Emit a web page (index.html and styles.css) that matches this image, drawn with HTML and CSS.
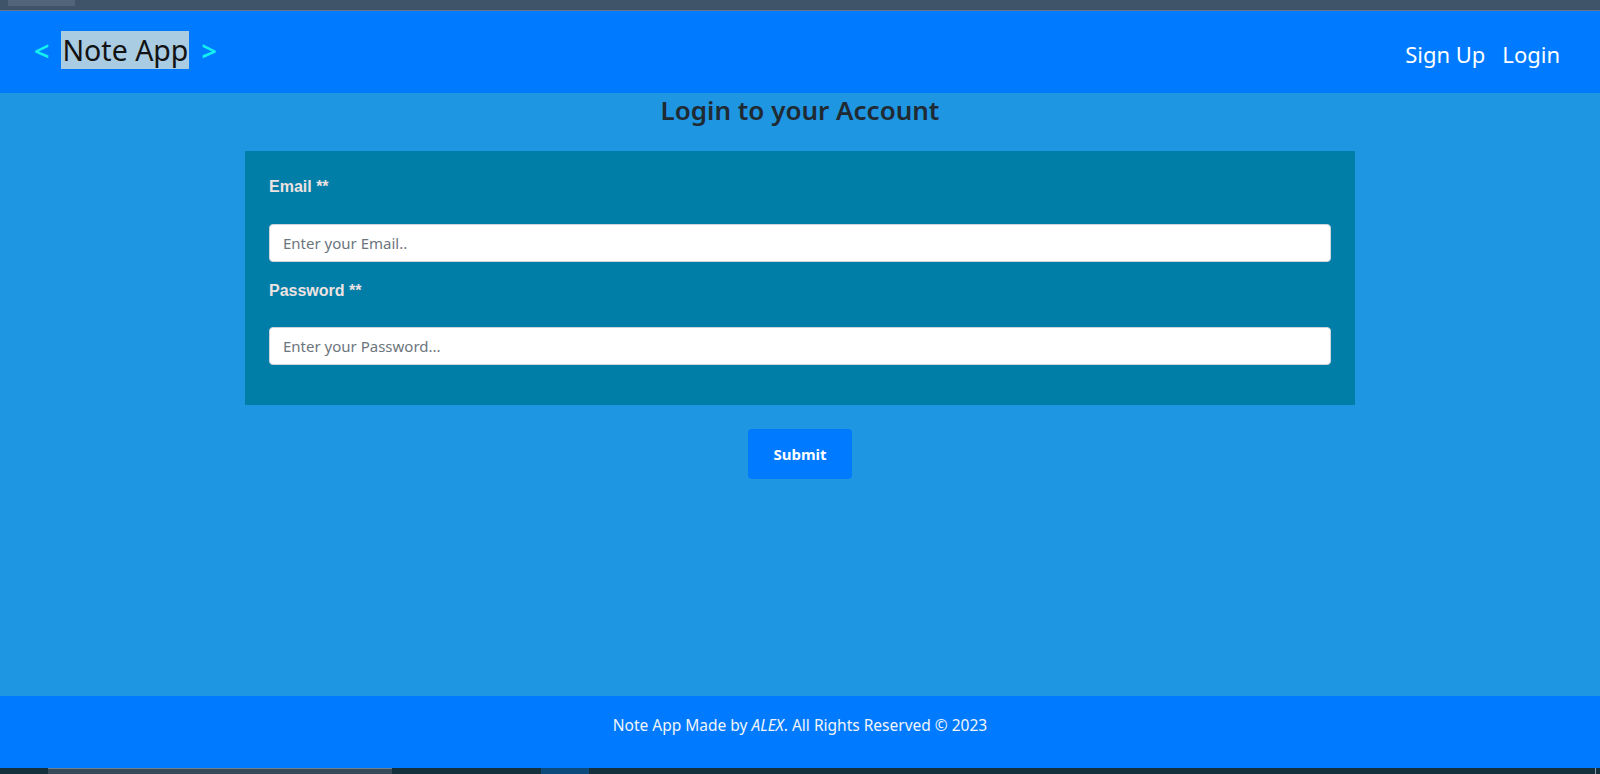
FILE: index.html
```html
<!DOCTYPE html>
<html lang="en">
<head>
<meta charset="utf-8">
<title>Note App</title>
<link rel="stylesheet" href="styles.css">
</head>
<body>
<div class="chrome-top"><div class="chrome-tab"></div></div>
<header class="navbar">
  <div class="brand">
    <span class="brand-arrow">&lt;</span>
    <span class="brand-name">Note App</span>
    <span class="brand-arrow">&gt;</span>
  </div>
  <nav class="nav-links">
    <a class="nav-link" href="#">Sign Up</a>
    <a class="nav-link" href="#">Login</a>
  </nav>
</header>
<main class="main">
  <h2 class="title">Login to your Account</h2>
  <form class="login-form">
    <div class="card">
      <label class="field-label" for="email">Email **</label>
      <input class="field-input" id="email" type="email" placeholder="Enter your Email..">
      <label class="field-label second" for="password">Password **</label>
      <input class="field-input" id="password" type="password" placeholder="Enter your Password...">
    </div>
    <button class="submit-btn" type="button">Submit</button>
  </form>
</main>
<footer class="footer">
  <p class="footer-text">Note App Made by <em>ALEX</em>. All Rights Reserved © 2023</p>
</footer>
<div class="chrome-bottom">
  <div class="task task-a"></div>
  <div class="task task-b"></div>
  <div class="task-end"></div>
</div>
</body>
</html>
```
FILE: styles.css
```css
* { box-sizing: border-box; }
html, body { margin: 0; padding: 0; }
body {
  width: 1600px;
  height: 774px;
  overflow: hidden;
  display: flex;
  flex-direction: column;
  font-family: "Noto Sans", "Open Sans", sans-serif;
  background: #1f96e2;
}
.chrome-top {
  height: 11px;
  background: #3f5469;
  border-bottom: 1px solid #66768a;
  padding-left: 8px;
  flex: none;
}
.chrome-tab {
  width: 67px;
  height: 6px;
  background: #516479;
}
.navbar {
  height: 82px;
  flex: none;
  background: #007bff;
  display: flex;
  align-items: center;
  justify-content: space-between;
  padding: 0 40px 0 34px;
}
.brand {
  display: flex;
  align-items: center;
  font-size: 28.5px;
  margin-top: -4px;
}
.brand-arrow {
  color: #14f0f0;
  font-size: 27px;
  font-weight: 600;
}
.brand-name {
  background: #a9cce2;
  color: #121212;
  margin: 0 12px 0 12px;
  line-height: 38px;
  padding: 0 1px;
}
.nav-links {
  display: flex;
  gap: 17px;
  margin-top: 4px;
}
.nav-link {
  color: #ffffff;
  text-decoration: none;
  font-size: 22px;
}
.main {
  flex: 1;
  display: flex;
  flex-direction: column;
  align-items: center;
}
.title {
  margin: 0;
  padding-top: 0;
  font-size: 26px;
  font-weight: 600;
  color: #1f2a33;
  line-height: 34px;
  height: 58px;
}
.login-form {
  display: flex;
  flex-direction: column;
  align-items: center;
  width: 1110px;
}
.card {
  width: 100%;
  background: #007ea7;
  padding: 24px 24px 40px;
  display: flex;
  flex-direction: column;
}
.field-label {
  font-family: "Liberation Sans", Arial, sans-serif;
  font-weight: bold;
  font-size: 16px;
  line-height: 24px;
  color: #ede2e2;
  margin-bottom: 25px;
}
.field-label.second { margin-top: 17px; margin-bottom: 24px; }
.field-input {
  height: 38px;
  border: 1px solid #ced4da;
  border-radius: 4px;
  padding: 0 13px;
  font-family: "Noto Sans", "Open Sans", sans-serif;
  font-size: 15px;
  background: #fff;
  outline: none;
}
.field-input::placeholder { color: #6c757d; }
.submit-btn {
  margin-top: 24px;
  width: 104px;
  height: 50px;
  border: none;
  border-radius: 4px;
  background: #007bff;
  color: #fff;
  font-family: "Noto Sans", "Open Sans", sans-serif;
  font-weight: bold;
  font-size: 15px;
}
.footer {
  height: 72px;
  flex: none;
  background: #007bff;
  display: flex;
  justify-content: center;
  padding-top: 17px;
}
.footer-text {
  margin: 0;
  color: #f2f4f8;
  font-size: 15.5px;
  line-height: 24px;
}
.chrome-bottom {
  height: 6px;
  flex: none;
  background: #15303d;
  display: flex;
}
.task { height: 6px; }
.task-a {
  margin-left: 48px;
  width: 344px;
  background: #364b5a;
  border-top: 1px solid #6f8090;
}
.task-b {
  margin-left: 149px;
  width: 48px;
  background: #0b4a7a;
}
.task-end {
  margin-left: auto;
  margin-right: 4px;
  width: 1px;
  background: #8a99a5;
}
```
